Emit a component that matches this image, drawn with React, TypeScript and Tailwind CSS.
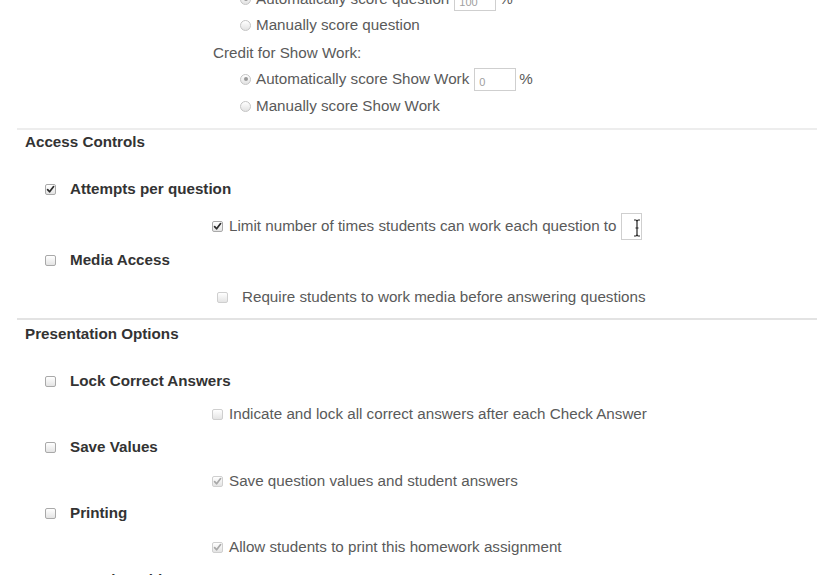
import React from "react";

function Check({ checked = false, faint = false, className = "" }: { checked?: boolean; faint?: boolean; className?: string }) {
  return (
    <span
      className={
        "relative inline-block w-[11px] h-[11px] shrink-0 rounded-[2px] border bg-gradient-to-b from-white to-[#e4e4e4] " +
        (faint ? "border-[#cfcfcf] " : "border-[#a9a9a9] ") +
        className
      }
    >
      {checked && (
        <svg viewBox="0 0 11 11" className="absolute left-[-1px] top-[-1px] w-[11px] h-[11px]">
          <path
            d="M2.6 5.6 L4.6 7.8 L8.6 2.6"
            fill="none"
            stroke={faint ? "#a8a8a8" : "#2b2b2b"}
            strokeWidth="1.7"
            strokeLinecap="round"
            strokeLinejoin="round"
          />
        </svg>
      )}
    </span>
  );
}

function Radio({ checked = false }: { checked?: boolean }) {
  return (
    <span className="relative inline-flex items-center justify-center w-[11px] h-[11px] shrink-0 rounded-full border border-[#c4c4c4] bg-gradient-to-b from-white to-[#e2e2e2]">
      {checked && <span className="w-[4px] h-[4px] rounded-full bg-[#9a9a9a]" />}
    </span>
  );
}

function Box({ value, w, h }: { value: string; w: string; h: string }) {
  return (
    <span className={"inline-flex items-end px-[4px] pb-[2px] border border-[#cfcfcf] bg-white text-[11px] text-[#a0a0a0] " + w + " " + h}>
      {value}
    </span>
  );
}

export default function App() {
  return (
    <div className="w-[817px] h-[575px] overflow-hidden bg-white font-['Liberation_Sans',Arial,sans-serif] text-[15.2px] leading-none text-[#5a5a5a]">
      <div className="mt-[-13px] flex flex-col">
        {/* Credit for question */}
        <div className="h-[24px] flex items-center pl-[240px]">
          <Radio checked />
          <span className="ml-[5px]">Automatically score question</span>
          <span className="ml-[5px] flex">
            <Box value="100" w="w-[42px]" h="h-[23px]" />
          </span>
          <span className="ml-[3px]">%</span>
        </div>
        <div className="h-[28px] flex items-center pl-[240px]">
          <Radio />
          <span className="ml-[5px]">Manually score question</span>
        </div>
        <div className="h-[28px] flex items-center pl-[213px]">
          <span>Credit for Show Work:</span>
        </div>
        <div className="h-[24px] flex items-center pl-[240px]">
          <Radio checked />
          <span className="ml-[5px]">Automatically score Show Work</span>
          <span className="ml-[5px] flex">
            <Box value="0" w="w-[42px]" h="h-[23px]" />
          </span>
          <span className="ml-[3px]">%</span>
        </div>
        <div className="h-[30px] flex items-center pl-[240px]">
          <Radio />
          <span className="ml-[5px]">Manually score Show Work</span>
        </div>

        <div className="mt-[7px] ml-[17px] h-[2px] bg-[#ededed]" />

        {/* Access Controls */}
        <div className="h-[24px] flex items-center pl-[25px] font-bold text-[#333]">Access Controls</div>

        <div className="mt-[23px] h-[24px] flex items-center pl-[45px]">
          <Check checked />
          <span className="ml-[14px] font-bold text-[#333]">Attempts per question</span>
        </div>

        <div className="mt-[12px] h-[26px] flex items-center pl-[212px]">
          <Check checked />
          <span className="ml-[6px]">Limit number of times students can work each question to</span>
          <span className="relative ml-[5px] w-[21px] h-[27px] border border-[#cfcfcf] bg-white">
            <svg viewBox="0 0 8 18" className="absolute left-[11px] top-[5px] w-[8px] h-[18px]">
              <path d="M1 1 H3 M5 1 H7 M3 1 Q4 1.5 4 3 V15 Q4 16.5 3 17 H1 M4 15 Q4 16.5 5 17 H7 M4 3 Q4 1.5 5 1 M2.5 9 H5.5" fill="none" stroke="#222" strokeWidth="1.2" />
            </svg>
          </span>
        </div>

        <div className="mt-[9px] h-[24px] flex items-center pl-[45px]">
          <Check />
          <span className="ml-[14px] font-bold text-[#333]">Media Access</span>
        </div>

        <div className="mt-[13px] h-[24px] flex items-center pl-[217px]">
          <Check faint />
          <span className="ml-[14px]">Require students to work media before answering questions</span>
        </div>

        <div className="mt-[9px] ml-[17px] h-[2px] bg-[#e3e3e3]" />

        {/* Presentation Options */}
        <div className="mt-[2px] h-[24px] flex items-center pl-[25px] font-bold text-[#333]">Presentation Options</div>

        <div className="mt-[23px] h-[24px] flex items-center pl-[45px]">
          <Check />
          <span className="ml-[14px] font-bold text-[#333]">Lock Correct Answers</span>
        </div>

        <div className="mt-[9px] h-[24px] flex items-center pl-[212px]">
          <Check faint />
          <span className="ml-[6px]">Indicate and lock all correct answers after each Check Answer</span>
        </div>

        <div className="mt-[9px] h-[24px] flex items-center pl-[45px]">
          <Check />
          <span className="ml-[14px] font-bold text-[#333]">Save Values</span>
        </div>

        <div className="mt-[10px] h-[24px] flex items-center pl-[212px]">
          <Check checked faint />
          <span className="ml-[6px]">Save question values and student answers</span>
        </div>

        <div className="mt-[8px] h-[24px] flex items-center pl-[45px]">
          <Check />
          <span className="ml-[14px] font-bold text-[#333]">Printing</span>
        </div>

        <div className="mt-[10px] h-[24px] flex items-center pl-[212px]">
          <Check checked faint />
          <span className="ml-[6px]">Allow students to print this homework assignment</span>
        </div>

        <div className="mt-[9px] h-[24px] flex items-center pl-[45px]">
          <Check />
          <span className="ml-[14px] font-bold text-[#333]">Learning Aids</span>
        </div>
      </div>
    </div>
  );
}
